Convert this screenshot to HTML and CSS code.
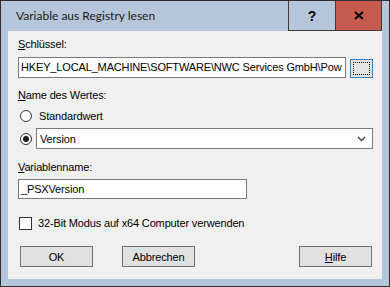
FILE: index.html
```html
<!DOCTYPE html>
<html lang="de">
<head>
    <meta charset="UTF-8">
    <title>Variable aus Registry lesen</title>
    <link rel="stylesheet" href="styles.css">
</head>
<body>
    <div class="window">
        <div class="titlebar">
            <span class="title">Variable aus Registry lesen</span>
            <div class="title-btn help">?</div>
            <div class="title-btn close">
                <svg width="10" height="9" viewBox="0 0 10 9">
                    <path d="M1 1 L9 8 M9 1 L1 8" stroke="#000" stroke-width="2"/>
                </svg>
            </div>
        </div>

        <div class="client">
            <div class="label"><u>S</u>chlüssel:</div>
            <div class="key-row">
                <div class="field key-field">HKEY_LOCAL_MACHINE\SOFTWARE\NWC Services GmbH\Pow</div>
                <div class="browse-btn"><div class="focus-rect"></div></div>
            </div>

            <div class="label name-label"><u>N</u>ame des Wertes:</div>
            <div class="radio-row">
                <span class="radio"></span>
                <span class="radio-text">Standardwert</span>
            </div>
            <div class="radio-row version-row">
                <span class="radio checked"></span>
                <div class="combo">
                    <span>Version</span>
                    <svg width="9" height="6" viewBox="0 0 9 6">
                        <path d="M1 1 L4.5 4.5 L8 1" fill="none" stroke="#555" stroke-width="1.6"/>
                    </svg>
                </div>
            </div>

            <div class="label var-label"><u>V</u>ariablenname:</div>
            <div class="field var-field">_PSXVersion</div>

            <div class="check-row">
                <span class="checkbox"></span>
                <span>32-Bit Modus auf x64 Computer verwenden</span>
            </div>

            <div class="buttons">
                <div class="btn">OK</div>
                <div class="btn">Abbrechen</div>
                <div class="spacer"></div>
                <div class="btn"><u>H</u>ilfe</div>
            </div>
        </div>
    </div>
</body>
</html>
```

FILE: styles.css
```css
* {
    margin: 0;
    padding: 0;
    box-sizing: border-box;
}

body {
    font-family: "Liberation Sans", Arial, sans-serif;
    font-size: 11px;
    letter-spacing: -0.15px;
    color: #000;
    background: #fff;
}

u {
    text-decoration: underline;
    text-underline-offset: 1px;
}

.window {
    width: 390px;
    height: 287px;
    border: 1px solid #2e2e2e;
    background: #b5c6db;
    display: flex;
    flex-direction: column;
}

.titlebar {
    height: 30px;
    display: flex;
    align-items: stretch;
}

.title {
    flex: 1;
    font-family: Lato, "Noto Sans", sans-serif;
    font-size: 12px;
    letter-spacing: 0;
    padding: 7px 0 0 15px;
    color: #1a1a1a;
}

.title-btn {
    border: 1px solid #3c3c3c;
    border-top: none;
    display: flex;
    align-items: center;
    justify-content: center;
}

.help {
    width: 47px;
    font-family: "Liberation Sans", Arial, sans-serif;
    font-weight: bold;
    font-size: 14px;
    border-right: none;
}

.close {
    width: 47px;
    margin-right: 7px;
    background: #c75a4e;
}

.client {
    flex: 1;
    margin: 0 7px 7px 7px;
    background: #f0f0f0;
    padding: 7px 9px 0 10px;
    display: flex;
    flex-direction: column;
}

.label {
    height: 13px;
    line-height: 13px;
}

.field {
    background: #fff;
    border: 1px solid #7a7a7a;
    height: 21px;
    line-height: 19px;
    padding-left: 2px;
    white-space: nowrap;
    overflow: hidden;
}

.key-row {
    display: flex;
    align-items: flex-start;
    margin-top: 6px;
}

.key-field {
    width: 328px;
}

.browse-btn {
    width: 23px;
    height: 19px;
    margin: 2px 0 0 4px;
    border: 1px solid #3d80b9;
    background: #e5e5e5;
    padding: 2px;
}

.focus-rect {
    width: 100%;
    height: 100%;
    border: 1px dotted #000;
}

.name-label {
    margin-top: 11px;
}

.radio-row {
    display: flex;
    align-items: center;
    height: 16px;
    margin-top: 6px;
}

.radio {
    width: 12px;
    height: 12px;
    border: 1px solid #333;
    border-radius: 50%;
    background: #fff;
    margin-left: 2px;
    display: flex;
    align-items: center;
    justify-content: center;
}

.radio.checked::after {
    content: "";
    width: 6px;
    height: 6px;
    border-radius: 50%;
    background: #1a1a1a;
}

.radio-text {
    margin-left: 7px;
}

.version-row {
    height: 21px;
    margin-top: 4px;
}

.combo {
    margin-left: 4px;
    width: 337px;
    height: 21px;
    background: #fff;
    border: 1px solid #7a7a7a;
    display: flex;
    align-items: center;
    justify-content: space-between;
    padding: 0 6px 0 3px;
}

.var-label {
    margin-top: 12px;
}

.var-field {
    width: 229px;
    margin-top: 5px;
    height: 20px;
    line-height: 18px;
}

.check-row {
    display: flex;
    align-items: center;
    margin-top: 17px;
    height: 14px;
}

.checkbox {
    width: 13px;
    height: 13px;
    border: 1px solid #333;
    background: #fff;
    margin: 0 6px 0 1px;
}

.buttons {
    display: flex;
    margin-top: 16px;
    padding: 0 1px 0 2px;
    gap: 29px;
}

.spacer {
    flex: 1;
}

.btn {
    width: 73px;
    height: 21px;
    background: #e1e1e1;
    border: 1px solid #707070;
    display: flex;
    align-items: center;
    justify-content: center;
}
```
